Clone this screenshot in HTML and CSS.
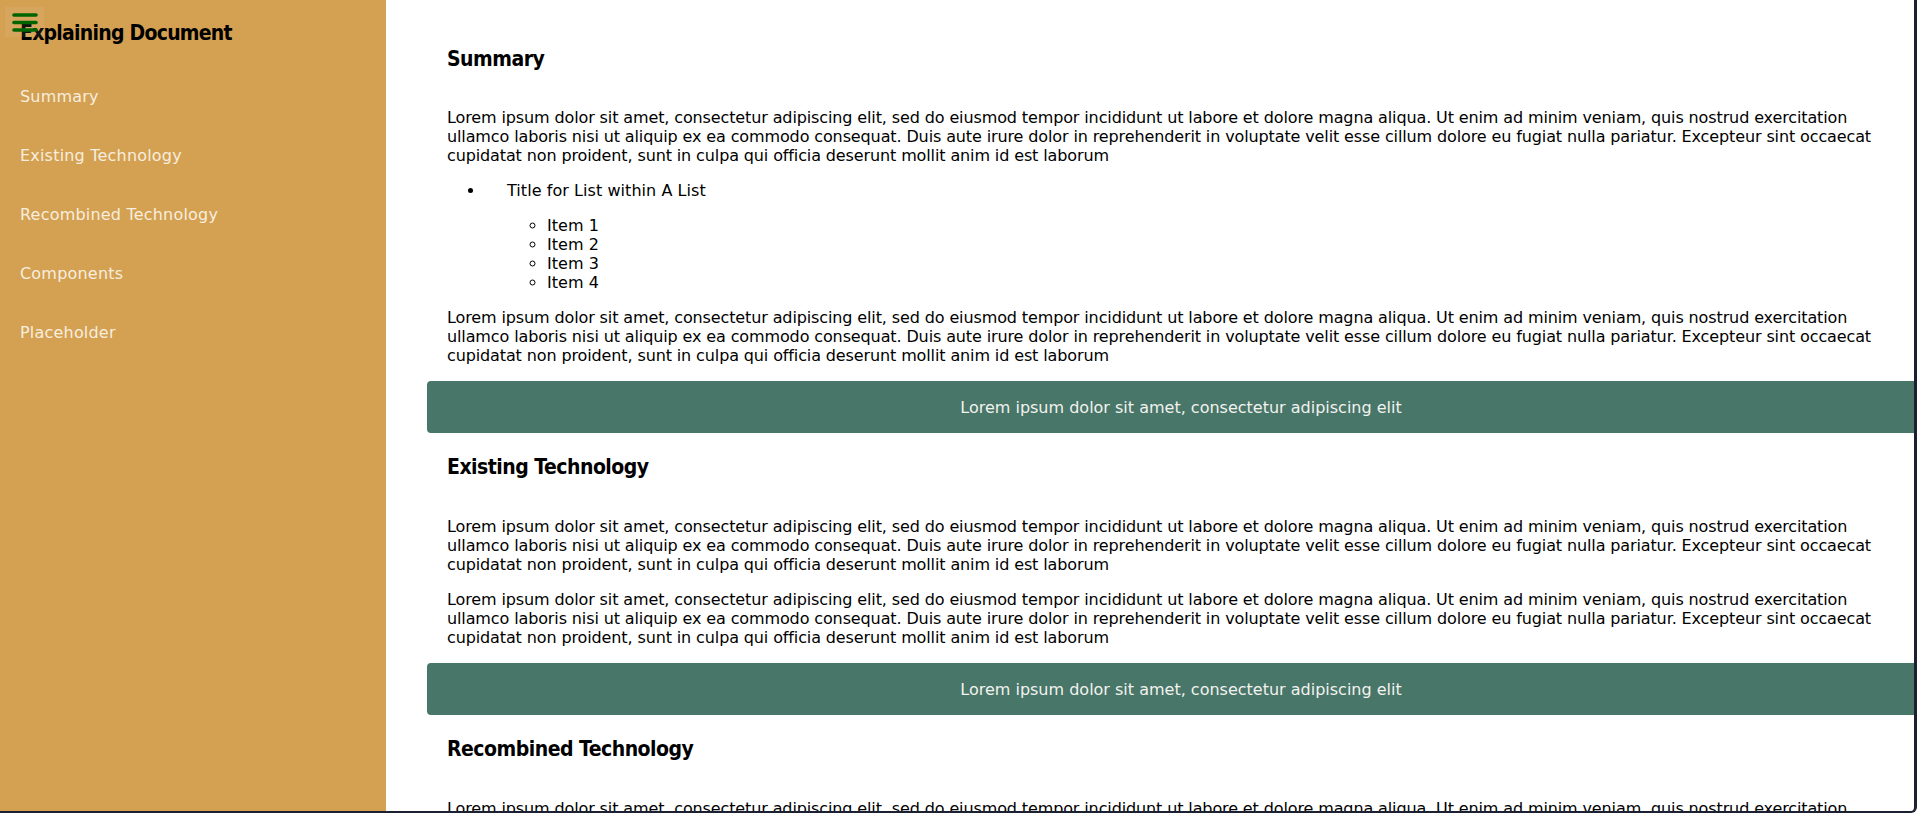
FILE: index.html
```html
<!DOCTYPE html>
<html lang="en">
<head>
<meta charset="utf-8">
<title>Explaining Document</title>
<link rel="stylesheet" href="styles.css">
</head>
<body>
<div class="layout">
  <aside class="sidebar">
    <button class="menu-btn" aria-label="Menu">
      <svg width="26" height="22" viewBox="0 0 26 22">
        <line x1="2" y1="4" x2="24" y2="4"/>
        <line x1="2" y1="11.5" x2="24" y2="11.5"/>
        <line x1="2" y1="19" x2="24" y2="19"/>
      </svg>
    </button>
    <h1 class="doc-title">Explaining Document</h1>
    <nav class="nav">
      <a href="#summary">Summary</a>
      <a href="#existing">Existing Technology</a>
      <a href="#recombined">Recombined Technology</a>
      <a href="#components">Components</a>
      <a href="#placeholder">Placeholder</a>
    </nav>
  </aside>
  <main class="main">
    <section class="section" id="summary">
      <h2 class="section-title">Summary</h2>
      <p class="text">Lorem ipsum dolor sit amet, consectetur adipiscing elit, sed do eiusmod tempor incididunt ut labore et dolore magna aliqua. Ut enim ad minim veniam, quis nostrud exercitation ullamco laboris nisi ut aliquip ex ea commodo consequat. Duis aute irure dolor in reprehenderit in voluptate velit esse cillum dolore eu fugiat nulla pariatur. Excepteur sint occaecat cupidatat non proident, sunt in culpa qui officia deserunt mollit anim id est laborum</p>
      <ul class="list">
        <li class="list-title">Title for List within A List
          <ul class="sublist">
            <li>Item 1</li>
            <li>Item 2</li>
            <li>Item 3</li>
            <li>Item 4</li>
          </ul>
        </li>
      </ul>
      <p class="text">Lorem ipsum dolor sit amet, consectetur adipiscing elit, sed do eiusmod tempor incididunt ut labore et dolore magna aliqua. Ut enim ad minim veniam, quis nostrud exercitation ullamco laboris nisi ut aliquip ex ea commodo consequat. Duis aute irure dolor in reprehenderit in voluptate velit esse cillum dolore eu fugiat nulla pariatur. Excepteur sint occaecat cupidatat non proident, sunt in culpa qui officia deserunt mollit anim id est laborum</p>
    </section>
    <div class="banner">Lorem ipsum dolor sit amet, consectetur adipiscing elit</div>
    <section class="section section-after" id="existing">
      <h2 class="section-title">Existing Technology</h2>
      <p class="text">Lorem ipsum dolor sit amet, consectetur adipiscing elit, sed do eiusmod tempor incididunt ut labore et dolore magna aliqua. Ut enim ad minim veniam, quis nostrud exercitation ullamco laboris nisi ut aliquip ex ea commodo consequat. Duis aute irure dolor in reprehenderit in voluptate velit esse cillum dolore eu fugiat nulla pariatur. Excepteur sint occaecat cupidatat non proident, sunt in culpa qui officia deserunt mollit anim id est laborum</p>
      <p class="text">Lorem ipsum dolor sit amet, consectetur adipiscing elit, sed do eiusmod tempor incididunt ut labore et dolore magna aliqua. Ut enim ad minim veniam, quis nostrud exercitation ullamco laboris nisi ut aliquip ex ea commodo consequat. Duis aute irure dolor in reprehenderit in voluptate velit esse cillum dolore eu fugiat nulla pariatur. Excepteur sint occaecat cupidatat non proident, sunt in culpa qui officia deserunt mollit anim id est laborum</p>
    </section>
    <div class="banner">Lorem ipsum dolor sit amet, consectetur adipiscing elit</div>
    <section class="section section-after" id="recombined">
      <h2 class="section-title">Recombined Technology</h2>
      <p class="text">Lorem ipsum dolor sit amet, consectetur adipiscing elit, sed do eiusmod tempor incididunt ut labore et dolore magna aliqua. Ut enim ad minim veniam, quis nostrud exercitation ullamco laboris nisi ut aliquip ex ea commodo consequat. Duis aute irure dolor in reprehenderit in voluptate velit esse cillum dolore eu fugiat nulla pariatur. Excepteur sint occaecat cupidatat non proident, sunt in culpa qui officia deserunt mollit anim id est laborum</p>
    </section>
  </main>
</div>
<div class="frame"></div>
</body>
</html>
```

FILE: styles.css
```css
html, body {
  margin: 0;
  padding: 0;
  overflow: hidden;
  height: 100%;
}
body {
  font-family: "DejaVu Sans", "Noto Sans", sans-serif;
  color: #000;
  background: #fff;
}
.layout {
  display: flex;
  height: 100vh;
}
.sidebar {
  position: relative;
  flex: 0 0 386px;
  background: #d4a052;
  padding: 20px 0 0 20px;
  box-sizing: border-box;
}
.menu-btn {
  position: absolute;
  left: 5px;
  top: 7px;
  width: 39px;
  height: 30px;
  border: none;
  padding: 0 0 0 7px;
  margin: 0;
  background: rgba(255, 255, 255, 0.07);
  display: flex;
  align-items: center;
}
.menu-btn svg line {
  stroke: #006400;
  stroke-width: 3.6;
  stroke-linecap: round;
}
.doc-title {
  margin: 0;
  font-family: "DejaVu Sans", sans-serif;
  font-stretch: condensed;
  font-weight: 700;
  font-size: 21px;
  line-height: 26px;
  letter-spacing: -0.75px;
  color: #000;
}
.nav {
  display: flex;
  flex-direction: column;
  gap: 39px;
  margin-top: 41px;
}
.nav a {
  color: #f7eedf;
  text-decoration: none;
  font-size: 16px;
  line-height: 20px;
  letter-spacing: 0.2px;
}
.main {
  flex: 1;
  min-width: 0;
  padding: 26px 0 0 41px;
}
.section {
  padding: 20px 16px 0 20px;
}
.section-after {
  padding-top: 21px;
}
.section-title {
  margin: 0 0 35px 0;
  font-family: "DejaVu Sans", sans-serif;
  font-stretch: condensed;
  font-weight: 700;
  font-size: 21px;
  line-height: 27px;
  letter-spacing: -0.5px;
}
.section-after .section-title {
  margin-bottom: 36px;
}
.text {
  margin: 0 0 16px 0;
  font-size: 16px;
  line-height: 19px;
  letter-spacing: -0.12px;
}
.list {
  margin: 0 0 16px 0;
  padding: 0 0 0 38px;
  font-size: 16px;
  line-height: 19px;
  letter-spacing: 0.06px;
}
.list-title {
  list-style: disc;
  padding-left: 22px;
}
.sublist {
  margin: 16px 0 0 0;
  padding: 0 0 0 40px;
  list-style: circle;
}
.banner {
  margin: 0 -18px 0 0;
  height: 52px;
  display: flex;
  align-items: center;
  justify-content: center;
  background: #487668;
  border-radius: 4px;
  color: #f2f2ef;
  font-size: 16px;
  letter-spacing: 0;
}
.frame {
  position: fixed;
  inset: 0;
  border-right: 3px solid #1b2130;
  border-bottom: 2px solid #1b2130;
  border-bottom-right-radius: 6px;
  pointer-events: none;
}
```
